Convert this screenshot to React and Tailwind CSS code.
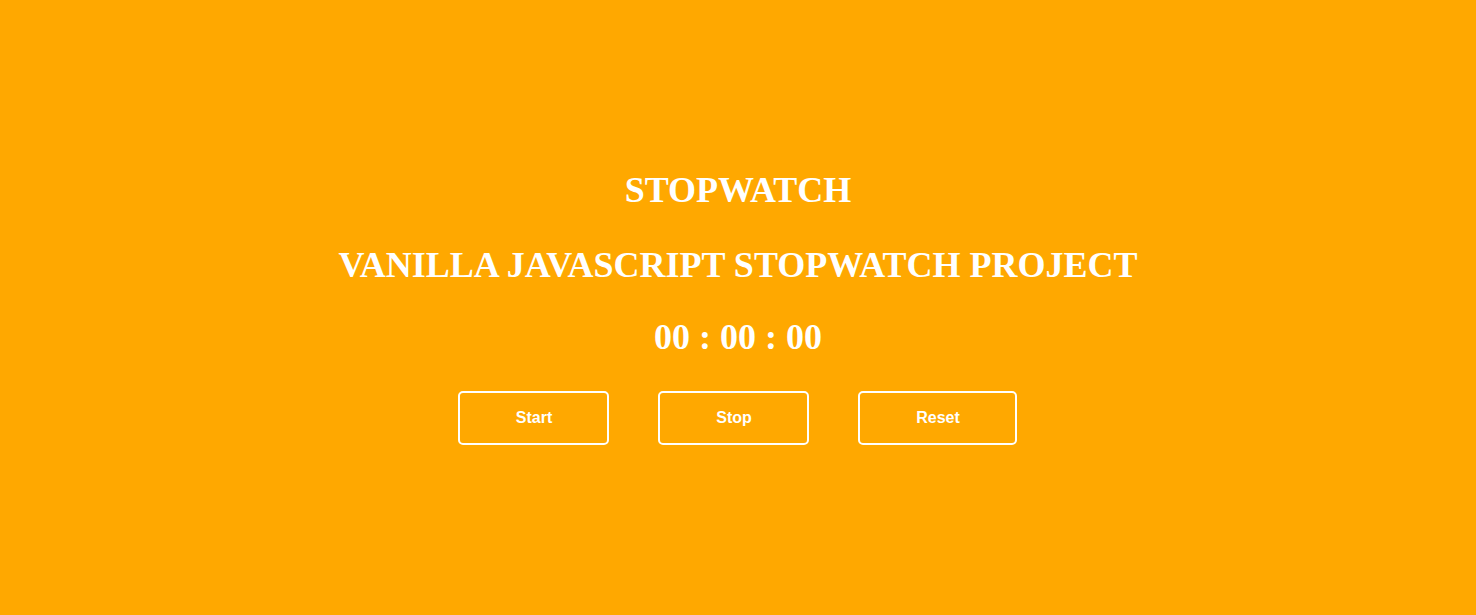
import React, { useState, useRef } from "react";

const pad = (n) => String(n).padStart(2, "0");

export default function App() {
  const [ticks, setTicks] = useState(0);
  const timer = useRef(null);

  const start = () => {
    if (timer.current) return;
    timer.current = setInterval(() => setTicks((t) => t + 1), 10);
  };

  const stop = () => {
    clearInterval(timer.current);
    timer.current = null;
  };

  const reset = () => {
    stop();
    setTicks(0);
  };

  const minutes = Math.floor(ticks / 6000);
  const seconds = Math.floor(ticks / 100) % 60;
  const hundredths = ticks % 100;

  return (
    <div className="min-h-screen w-full bg-[#ffa800] flex items-center justify-center text-white">
      <div className="flex flex-col items-center">
        <h1 className="font-['Liberation_Serif',serif] font-bold text-[36px] leading-[40px]">
          STOPWATCH
        </h1>
        <h2 className="mt-[35px] font-['Liberation_Serif',serif] font-bold text-[36px] leading-[40px]">
          VANILLA JAVASCRIPT STOPWATCH PROJECT
        </h2>
        <div className="mt-[32px] font-['Liberation_Serif',serif] font-bold text-[36px] leading-[40px]">
          {pad(minutes)} : {pad(seconds)} : {pad(hundredths)}
        </div>

        {/* controls */}
        <div className="mt-[34px] flex gap-[49px] font-['Liberation_Sans',Arial,sans-serif] font-bold text-[16px]">
          <button
            onClick={start}
            className="w-[151px] h-[54px] rounded-[5px] border-2 border-white bg-transparent text-white cursor-pointer"
          >
            Start
          </button>
          <button
            onClick={stop}
            className="w-[151px] h-[54px] rounded-[5px] border-2 border-white bg-transparent text-white cursor-pointer"
          >
            Stop
          </button>
          <button
            onClick={reset}
            className="w-[159px] h-[54px] rounded-[5px] border-2 border-white bg-transparent text-white cursor-pointer"
          >
            Reset
          </button>
        </div>
      </div>
    </div>
  );
}
